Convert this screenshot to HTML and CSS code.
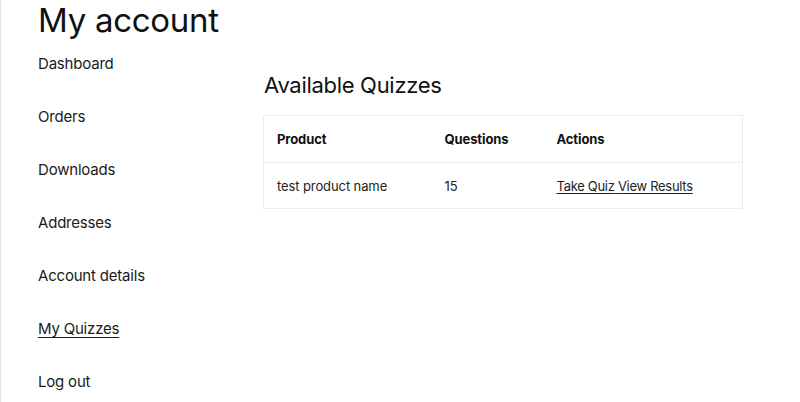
FILE: index.html
```html
<!DOCTYPE html>
<html lang="en">
<head>
<meta charset="utf-8">
<title>My account</title>
<link rel="stylesheet" href="styles.css">
</head>
<body>
<div class="page">
  <h1 class="title">My account</h1>
  <div class="layout">
    <nav class="sidebar">
      <ul class="nav">
        <li><a href="#">Dashboard</a></li>
        <li><a href="#">Orders</a></li>
        <li><a href="#">Downloads</a></li>
        <li><a href="#">Addresses</a></li>
        <li><a href="#">Account details</a></li>
        <li><a href="#" class="active">My Quizzes</a></li>
        <li><a href="#">Log out</a></li>
      </ul>
    </nav>
    <main class="content">
      <h2 class="subtitle">Available Quizzes</h2>
      <table class="quizzes">
        <colgroup>
          <col class="c1"><col class="c2"><col class="c3">
        </colgroup>
        <thead>
          <tr><th>Product</th><th>Questions</th><th>Actions</th></tr>
        </thead>
        <tbody>
          <tr>
            <td>test product name</td>
            <td>15</td>
            <td><span class="actions"><a href="#">Take Quiz</a> <a href="#">View Results</a></span></td>
          </tr>
        </tbody>
      </table>
    </main>
  </div>
</div>
</body>
</html>
```
FILE: styles.css
```css
html, body {
  margin: 0;
  padding: 0;
  background: #fff;
}
body {
  font-family: Inter, "Noto Sans", sans-serif;
  color: #111;
  border-left: 1px solid #e2e2e2;
  min-height: 402px;
  box-sizing: border-box;
}
.page {
  padding-left: 37px;
}
.title {
  margin: 0;
  font-size: 33px;
  line-height: 40px;
  font-weight: 400;
  letter-spacing: -0.3px;
}
.layout {
  display: flex;
}
.sidebar {
  width: 225px;
  flex: none;
}
.nav {
  list-style: none;
  margin: 0;
  padding: 12px 0 0 0;
  display: flex;
  flex-direction: column;
  gap: 29px;
}
.nav li {
  line-height: 24px;
  font-size: 15px;
}
.nav a {
  color: #1a1a1a;
  text-decoration: none;
  letter-spacing: -0.2px;
}
.nav a.active {
  text-decoration: underline;
  text-underline-offset: 3px;
  text-decoration-thickness: 1px;
}
.content {
  width: 479px;
}
.subtitle {
  margin: 30px 0 15px 1px;
  font-size: 22px;
  line-height: 30px;
  font-weight: 400;
  letter-spacing: -0.3px;
}
.quizzes {
  width: 479px;
  border-collapse: collapse;
  border: 1px solid #ececec;
  font-size: 13px;
  table-layout: fixed;
}
.c1 { width: 168px; }
.c2 { width: 112px; }
.c3 { width: 199px; }
.quizzes th, .quizzes td {
  text-align: left;
  padding: 0 13px;
  letter-spacing: -0.1px;
}
.quizzes th {
  height: 46px;
  font-weight: 700;
  border-bottom: 1px solid #ececec;
}
.quizzes td {
  height: 45px;
  color: #222;
}
.actions {
  text-decoration: underline;
  text-underline-offset: 2px;
  text-decoration-thickness: 1px;
  letter-spacing: -0.3px;
}
.quizzes a {
  color: #222;
  text-decoration: none;
}
```
